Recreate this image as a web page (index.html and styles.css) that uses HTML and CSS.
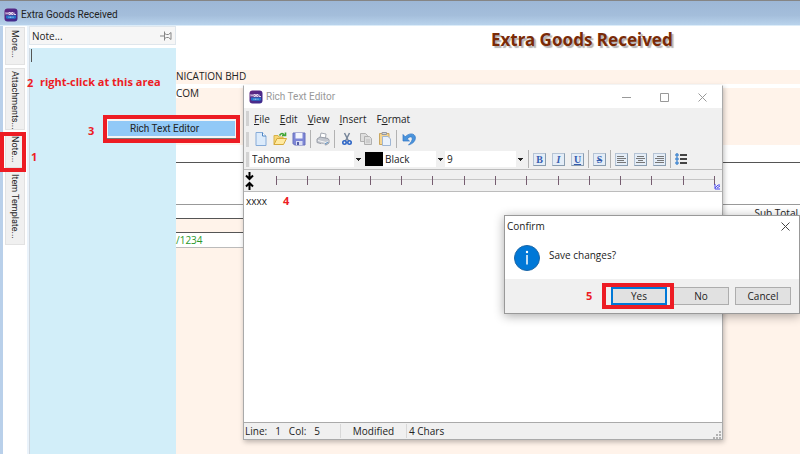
FILE: index.html
```html
<!DOCTYPE html>
<html lang="en">
<head>
<meta charset="utf-8">
<title>Extra Goods Received</title>
<link rel="stylesheet" href="styles.css">
</head>
<body>
<svg class="defs" width="0" height="0" aria-hidden="true">
  <defs>
    <linearGradient id="logoFill" x1="0" y1="0" x2="1" y2="1"><stop offset="0" stop-color="#63267f"/><stop offset="1" stop-color="#3c2c90"/></linearGradient>
    <symbol id="logo" viewBox="0 0 14 14">
      <rect x="0.5" y="0.5" width="13" height="13" rx="3" fill="url(#logoFill)"/>
      <path d="M2 7.500h10v1.800a1.500 1.500 0 0 1-1.500 1.500h-7A1.500 1.500 0 0 1 2 9.300z" fill="#2474c8"/>
      <path d="M2 6.500V4.500l1 1 1-1v2M5 4.500h1.500v2H5zM7.500 6.500v-2H9v2zM10 4.500v2h2" fill="none" stroke="#f3e6f6" stroke-width="0.9"/>
      <path d="M4.500 9.200h5" stroke="#b9dcf5" stroke-width="1" stroke-dasharray="1 0.500"/>
    </symbol>
  </defs>
</svg>

<header class="app-bar">
  <svg class="logo" aria-hidden="true"><use href="#logo"/></svg>
  <span>Extra Goods Received</span>
</header>

<main class="workspace">
  <nav class="side-tabs">
    <button class="side-tab tab-more">More...</button>
    <button class="side-tab tab-attach">Attachments...</button>
    <button class="side-tab tab-note">Note...</button>
    <button class="side-tab tab-item">Item Template...</button>
  </nav>

  <section class="note-panel">
    <div class="note-head">
      <span>Note...</span>
      <svg width="12" height="10" viewBox="0 0 12 10" fill="none" stroke="#858585" aria-hidden="true"><path d="M0 5h4M4.500 0.500v9M4.500 2.500l2 1h2l2.500-2v7l-2.500-2h-2l-2 1"/></svg>
    </div>
    <div class="note-body"><i class="caret"></i></div>
  </section>

  <section class="form">
    <div class="form-head"><h1>Extra Goods Received</h1></div>
    <div class="row-company">NICATION BHD</div>
    <div class="row-mail"><span>COM</span></div>
    <div class="row-blank"></div>
    <div class="row-grid"></div>
    <div class="row-total">Sub Total</div>
    <div class="row-band"></div>
    <div class="row-code">/1234</div>
  </section>
</main>

<section class="editor">
  <div class="editor-title">
    <svg class="logo" aria-hidden="true"><use href="#logo"/></svg>
    <span>Rich Text Editor</span>
    <div class="win-buttons">
      <button aria-label="Minimize"><svg width="9" height="9" viewBox="0 0 9 9"><path d="M0 4.500h9"/></svg></button>
      <button aria-label="Maximize"><svg width="9" height="9" viewBox="0 0 9 9"><path d="M0.500 0.500h8v8h-8z"/></svg></button>
      <button aria-label="Close"><svg width="9" height="9" viewBox="0 0 9 9"><path d="M0.500 0.500l8 8M8.500 0.500l-8 8"/></svg></button>
    </div>
  </div>

  <div class="menu-bar">
    <i class="grip"></i>
    <button><u>F</u>ile</button>
    <button><u>E</u>dit</button>
    <button><u>V</u>iew</button>
    <button><u>I</u>nsert</button>
    <button>F<u>o</u>rmat</button>
  </div>

  <div class="tool-bar">
    <i class="grip"></i>
    <button aria-label="New"><svg viewBox="0 0 14 14"><path d="M2 0.500h6.500L12 4v9.500H2z" fill="#dcebfb" stroke="#86abd8"/><path d="M8.500 0.500V4H12" fill="#fff" stroke="#4f86c4"/></svg></button>
    <button aria-label="Open"><svg viewBox="0 0 14 14"><path d="M1 12.500v-9h4l1 1.500h4v2" fill="#f7d777" stroke="#d9b34a"/><path d="M1 12.500l3-6h9.500l-3 6z" fill="#ffe9a0" stroke="#d5aa3b"/><path d="M6.500 3.500C8 1 10 1 11 3M9 3.500h3.500V0.500" fill="none" stroke="#3fa535" stroke-width="1.600"/></svg></button>
    <button aria-label="Save"><svg viewBox="0 0 14 14"><path d="M1 1h12v12H2.500L1 11.500z" fill="#7d86d6" stroke="#6870bd"/><path d="M3.500 1h7v5.500h-7z" fill="#f2f4fd"/><path d="M4 9h6.500v4H4z" fill="#dadef4"/><path d="M5 10h2v3H5z" fill="#5660a8"/></svg></button>
    <i class="sep"></i>
    <button aria-label="Print"><svg viewBox="0 0 14 14"><path d="M4 6L5 1l5 1-0.500 4z" fill="#fff" stroke="#a4a9b2"/><path d="M1 7l3-2 8 1.500 1 1.500v3l-3 2-9-2.500z" fill="#c3c7cf" stroke="#9a9fa9"/><path d="M2 8.500l8 2 2.500-1.500M5 12l4 1" fill="none" stroke="#f6f6f6"/><path d="M9 12l3-2" stroke="#5f96c8"/></svg></button>
    <i class="sep"></i>
    <button aria-label="Cut"><svg viewBox="0 0 14 14"><path d="M4.500 1l4 8M9.500 1l-4 8" stroke="#77869a" stroke-width="1.500"/><circle cx="4.500" cy="10.500" r="1.700" fill="none" stroke="#2e66c6" stroke-width="1.600"/><circle cx="9.500" cy="10.500" r="1.700" fill="none" stroke="#2e66c6" stroke-width="1.600"/></svg></button>
    <button aria-label="Copy"><svg viewBox="0 0 14 14" fill="#dedede" stroke="#b0b0b0"><path d="M1.500 1.500h5l2 2v6h-7z"/><path d="M5.500 4.500h5l2 2v6h-7z"/><path d="M7 8h4M7 10h4" stroke="#bdbdbd"/></svg></button>
    <button aria-label="Paste"><svg viewBox="0 0 14 14"><path d="M1.500 1.500h9.500v11H1.500z" fill="#f5d591" stroke="#c9a760"/><path d="M4 0.500h4.500v2H4z" fill="#d3d6dc" stroke="#96999f"/><path d="M4.500 4.500h5.500L12.500 7v6.500h-8z" fill="#eaf2fc" stroke="#9fb6d4"/></svg></button>
    <i class="sep"></i>
    <button aria-label="Undo"><svg viewBox="0 0 14 14"><path d="M1 2.500v6.500h6.500L5.200 6.900c2-2.400 4.600-2.600 5-0.900 0.500 2-1.200 4.500-3.700 7 5-1.500 7.300-4.500 6.800-8C12.500 1 7 0.800 3.200 4.800z" fill="#4a94dc" stroke="#2f74c4" stroke-width="0.700"/></svg></button>
  </div>

  <div class="format-bar">
    <i class="grip"></i>
    <select class="pick pick-font" aria-label="Font"><option>Tahoma</option></select>
    <i class="swatch"></i>
    <select class="pick pick-color" aria-label="Color"><option>Black</option></select>
    <select class="pick pick-size" aria-label="Size"><option>9</option></select>
    <i class="sep"></i>
    <button class="key" aria-label="Bold"><b>B</b></button>
    <button class="key" aria-label="Italic"><em>I</em></button>
    <button class="key" aria-label="Underline"><u>U</u></button>
    <i class="sep"></i>
    <button class="key" aria-label="Strikethrough"><s>S</s></button>
    <i class="sep"></i>
    <button class="key" aria-label="Align left"><svg width="9" height="9" viewBox="0 0 9 9"><path d="M0 1.500h7M0 3.500h9M0 5.500h7M0 7.500h9"/></svg></button>
    <button class="key" aria-label="Center"><svg width="9" height="9" viewBox="0 0 9 9"><path d="M1 1.500h7M0 3.500h9M2 5.500h5M0 7.500h9"/></svg></button>
    <button class="key" aria-label="Align right"><svg width="9" height="9" viewBox="0 0 9 9"><path d="M2 1.500h7M0 3.500h9M2 5.500h7M0 7.500h9"/></svg></button>
    <i class="sep"></i>
    <button class="bullets" aria-label="Bullets"><svg width="12" height="12" viewBox="0 0 12 12"><path d="M5 2h7M5 6h7M5 10h7" stroke="#444" stroke-width="2"/><g fill="#5fa4e8" stroke="#2c6cb4" stroke-width="0.600"><circle cx="2" cy="2" r="1.400"/><circle cx="2" cy="6" r="1.400"/><circle cx="2" cy="10" r="1.400"/></g></svg></button>
  </div>

  <div class="ruler">
    <svg class="indent" width="9" height="18" viewBox="0 0 9 18" fill="none" stroke="#000" stroke-width="2" aria-hidden="true"><path d="M4.500 0v6M1 3.500L4.500 7 8 3.500M4.500 18v-6M1 14.500L4.500 11 8 14.500"/></svg>
    <div class="ticks"><i></i><i></i><i></i><i></i><i></i><i></i><i></i><i></i><i></i><i></i><i></i><i></i><i></i><i></i><i></i></div>
    <svg class="margin-mark" width="7" height="7" viewBox="0 0 7 7" fill="none" stroke="#4a4af0" aria-hidden="true"><path d="M1 1v5h5M1 5l3-3 2 0M3 5l3-2"/></svg>
  </div>

  <textarea class="page" aria-label="Text" spellcheck="false">xxxx</textarea>

  <footer class="status">
    <span class="st-pos"><span>Line:</span><span>1</span><span>Col:</span><span>5</span></span>
    <span class="st-mod">Modified</span>
    <span class="st-count">4 Chars</span>
    <svg width="8" height="8" viewBox="0 0 8 8" fill="#b2b2b2" aria-hidden="true"><path d="M6 0h2v2H6zM3 3h2v2H3zM6 3h2v2H6zM0 6h2v2H0zM3 6h2v2H3zM6 6h2v2H6z"/></svg>
  </footer>
</section>

<div class="context-menu"><button>Rich Text Editor</button></div>

<section class="dialog" role="dialog" aria-label="Confirm">
  <div class="dialog-title">
    <span>Confirm</span>
    <button aria-label="Close"><svg width="9" height="9" viewBox="0 0 9 9"><path d="M0.500 0.500l8 8M8.500 0.500l-8 8"/></svg></button>
  </div>
  <div class="dialog-body">
    <svg width="26" height="26" viewBox="0 0 26 26" aria-hidden="true"><circle cx="13" cy="13" r="12.500" fill="#0078d7" stroke="#1b66a6"/><circle cx="13" cy="7" r="1.200" fill="#fff"/><path d="M13 10v9.500" stroke="#fff" stroke-width="1.500"/></svg>
    <p>Save changes?</p>
  </div>
  <div class="dialog-actions">
    <button class="default">Yes</button>
    <button>No</button>
    <button>Cancel</button>
  </div>
</section>

<div class="frame frame-note"></div>
<div class="frame frame-menu"></div>
<div class="frame frame-yes"></div>
<span class="mark mark-1">1</span>
<span class="mark mark-2">2</span>
<span class="mark mark-text">right-click at this area</span>
<span class="mark mark-3">3</span>
<span class="mark mark-4">4</span>
<span class="mark mark-5">5</span>
</body>
</html>
```
FILE: styles.css
```css
* { box-sizing: border-box; }
body {
  margin: 0;
  min-height: 100vh;
  display: flex;
  flex-direction: column;
  position: relative;
  overflow: hidden;
  background: #fff;
  color: #222;
  font: 10px/14px "Open Sans", "Noto Sans", sans-serif;
}
button, select, textarea { font: inherit; color: inherit; margin: 0; padding: 0; border: 0; background: none; }
h1, p { margin: 0; }
.defs { position: absolute; }
.logo { width: 14px; height: 14px; flex: none; }

.app-bar {
  display: flex;
  align-items: center;
  gap: 3px;
  height: 26px;
  padding: 3px 4px 0;
  border-top: 1px solid #858585;
  border-bottom: 1px solid #dcecf8;
  background: linear-gradient(#9db7d6, #a4bedb 60%, #b9d3ec);
}
.app-bar, .editor-title, .context-menu { font-family: Roboto, "Open Sans", sans-serif; }
.workspace { flex: 1; display: flex; border-left: 3px solid #b9d0ea; }

.side-tabs { width: 24px; padding: 1px 2px; display: flex; flex-direction: column; gap: 3px; }
.side-tab {
  width: 20px;
  border: 1px solid #e2e2e2;
  background: #f0f0f0;
  writing-mode: vertical-rl;
  text-align: left;
  white-space: nowrap;
  padding-top: 2px;
  font: 9px/18px Roboto, "Open Sans", sans-serif;
}
.tab-more { height: 38px; }
.tab-attach { height: 62px; }
.tab-note { height: 35px; }
.tab-item { height: 74px; }

.note-panel { width: 149px; display: flex; flex-direction: column; border-left: 2px solid #eaf3fb; }
.note-head {
  height: 19px;
  margin-bottom: 3px;
  padding: 0 3px 0 2px;
  display: flex;
  align-items: center;
  justify-content: space-between;
  border: 1px solid #dfe6ec;
  background: #f6f6f6;
}
.note-body { flex: 1; background: #d2eef9; border-left: 1px solid #cfd8e0; padding: 1px; }
.caret { display: block; width: 1px; height: 13px; background: #555; }

.form { flex: 1; display: flex; flex-direction: column; background: #fff3ea; }
.form-head { height: 44px; background: #fff; padding: 4px 0 0 315px; }
h1 {
  font: bold 17px/20px "Noto Sans", sans-serif;
  color: #7a2a06;
  text-shadow: 2px 2px 1px #b4b4b4;
  white-space: nowrap;
}
.row-company { height: 14px; line-height: 12px; }
.row-mail { height: 61px; border-top: 4px solid #fff; line-height: 10px; }
.row-mail span { background: #fff; display: inline-block; width: 5px; white-space: nowrap; }
.row-blank { height: 18px; background: #fff; border-bottom: 1px solid #555; }
.row-grid { height: 42px; background: #fff; border-bottom: 1px solid #999; }
.row-total { height: 14px; background: #fff; border-bottom: 1px solid #555; text-align: right; padding: 1px 2px 0 0; }
.row-band { height: 14px; border-bottom: 1px solid #555; }
.row-code { height: 15px; background: #fff; border-bottom: 1px solid #bbb; color: #2b982b; }

.editor {
  position: absolute;
  left: 243px;
  top: 85px;
  width: 480px;
  height: 355px;
  display: flex;
  flex-direction: column;
  border: 1px solid #aaa;
  border-top-color: #fff;
  background: #f0f0f0;
  box-shadow: 1px 2px 5px #0004;
}
.editor-title { height: 22px; padding: 0 15px 0 5px; display: flex; align-items: center; gap: 3px; background: #fff; color: #999; }
.win-buttons { margin-left: auto; display: flex; gap: 29px; }
.win-buttons button { height: 9px; display: flex; }
.win-buttons svg, .dialog-title svg { fill: none; stroke: #999; }
.menu-bar, .tool-bar, .format-bar { display: flex; align-items: center; padding-left: 2px; }
.grip { width: 3px; height: 15px; background: #d2d2d2; flex: none; }
.sep { width: 1px; height: 18px; background: #b2b2b2; flex: none; }
.menu-bar { height: 21px; }
.menu-bar button { margin: 0 5px; }
.tool-bar { height: 20px; gap: 4px; }
.tool-bar button { width: 15px; height: 14px; display: flex; justify-content: center; }
.tool-bar svg { width: 14px; height: 14px; display: block; }
.format-bar { height: 21px; border-bottom: 1px solid #bcbcbc; }
.pick {
  height: 16px;
  appearance: none;
  background: linear-gradient(#222, #222) right 2px top 7px / 5px 1px no-repeat, linear-gradient(#222, #222) right 3px top 8px / 3px 1px no-repeat, linear-gradient(#222, #222) right 4px top 9px / 1px 1px no-repeat, linear-gradient(#f0f0f0, #f0f0f0) right / 9px 16px no-repeat, #fff;
  padding-left: 2px;
}
.pick-font { width: 113px; margin-left: 1px; }
.swatch { width: 18px; height: 14px; margin-left: 2px; background: #000; flex: none; }
.pick-color { width: 62px; }
.pick-size { width: 80px; margin: 0 3px 0 0; }
.format-bar .sep { margin: 0 4px; }
.format-bar .pick-size + .sep { margin-left: 0; }
.key {
  width: 13px;
  height: 13px;
  margin-right: 6px;
  display: flex;
  align-items: center;
  justify-content: center;
  flex: none;
  border: 1px solid #b6c4d5;
  border-right-color: #899caf;
  border-bottom-color: #899caf;
  background: #e4edf7;
  color: #365cae;
  font: bold 10px/11px "Liberation Serif", serif;
}
.key:has(+ .sep) { margin-right: 0; }
.key svg { stroke: #777; }
.bullets { height: 12px; display: flex; }
.ruler { height: 22px; display: flex; align-items: center; position: relative; padding: 0 7px 0 1px; border-bottom: 1px solid #bcbcbc; }
.indent { flex: none; }
.ticks {
  flex: 1;
  height: 9px;
  margin-left: 22px;
  display: flex;
  justify-content: space-between;
  background: linear-gradient(#c5c5c5, #c5c5c5) 0 3px / 100% 1px no-repeat;
}
.ticks i { width: 1px; background: #765d70; }
.margin-mark { position: absolute; right: 1px; bottom: 1px; }
.page { flex: 1; width: 100%; padding: 2px; display: block; resize: none; outline: 0; background: #fff; border-bottom: 1px solid #aaa; }
.status { height: 16px; display: flex; align-items: center; padding-right: 1px; }
.st-pos { width: 97px; padding-left: 1px; display: flex; gap: 8px; border-right: 1px solid #d8d8d8; }
.st-mod { width: 66px; text-align: center; border-right: 1px solid #d8d8d8; }
.st-count { padding-left: 2px; }
.status svg { margin-left: auto; align-self: flex-end; }

.context-menu { position: absolute; left: 106px; top: 118px; width: 131px; padding: 3px 2px 2px; background: #f5f5f5; box-shadow: 1px 1px 1px #777; }
.context-menu button { display: block; width: 100%; height: 15px; padding-left: 22px; background: #91c9f7; text-align: left; }

.dialog { position: absolute; left: 504px; top: 215px; right: 0; border: 1px solid #999; background: #fff; box-shadow: 0 2px 10px #0005; }
.dialog-title { height: 20px; padding: 0 9px 0 2px; display: flex; align-items: center; justify-content: space-between; }
.dialog-title button { height: 9px; display: flex; }
.dialog-title svg { stroke: #444; }
.dialog-body { height: 43px; padding: 9px; display: flex; gap: 9px; }
.dialog-body svg { flex: none; }
.dialog-body p { padding-top: 3px; }
.dialog-actions { height: 34px; padding-right: 8px; display: flex; align-items: center; justify-content: flex-end; gap: 6px; background: #f0f0f0; }
.dialog-actions button { width: 56px; height: 18px; border: 1px solid #adadad; background: #e1e1e1; }
.dialog-actions .default { border: 2px solid #0078d7; }

.frame { position: absolute; border: 4px solid #ed1c24; pointer-events: none; }
.frame-note { left: 0; top: 132px; width: 26px; height: 40px; }
.frame-menu { left: 103px; top: 115px; width: 137px; height: 28px; }
.frame-yes { left: 602px; top: 283px; width: 72px; height: 26px; }
.mark { position: absolute; color: #ed1c24; font: bold 11px/14px "Open Sans", "Noto Sans", sans-serif; white-space: nowrap; }
.mark-1 { left: 31px; top: 150px; }
.mark-2 { left: 27px; top: 76px; }
.mark-text { left: 40px; top: 75px; }
.mark-3 { left: 88px; top: 124px; }
.mark-4 { left: 283px; top: 194px; }
.mark-5 { left: 586px; top: 289px; }
```
